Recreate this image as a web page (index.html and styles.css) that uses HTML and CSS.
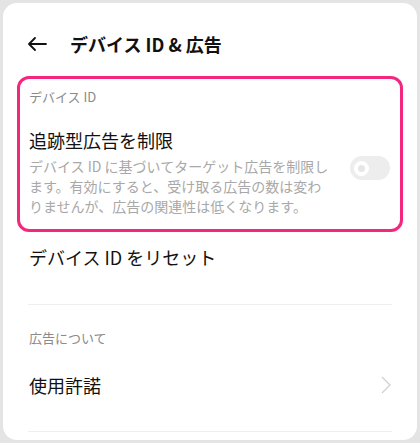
FILE: index.html
```html
<!DOCTYPE html>
<html lang="ja">
	<head>
		<meta charset="UTF-8" />
		<meta name="viewport" content="width=device-width, initial-scale=1.0" />
		<title>デバイス ID &amp; 広告</title>
		<link rel="stylesheet" href="styles.css">
	</head>
	<body>
		<div class="card">
			<div class="header">
				<svg class="back" width="20" height="14" viewBox="0 0 20 14">
					<path d="M19 7H2M8 1L2 7l6 6" fill="none" stroke="#111" stroke-width="1.8" stroke-linecap="round" stroke-linejoin="round" />
				</svg>
				<h1 class="title">デバイス ID &amp; 広告</h1>
			</div>

			<div class="highlight">
				<div class="sectionLabel">デバイス ID</div>
				<div class="row">
					<div class="rowText">
						<div class="rowTitle">追跡型広告を制限</div>
						<div class="rowDesc">デバイス ID に基づいてターゲット広告を制限し<br />ます。有効にすると、受け取る広告の数は変わ<br />りませんが、広告の関連性は低くなります。</div>
					</div>
					<div class="toggle"><span class="knob"></span></div>
				</div>
			</div>

			<div class="item itemReset">デバイス ID をリセット</div>
			<div class="divider"></div>

			<div class="sectionLabel sectionAbout">広告について</div>
			<div class="item itemLink">
				<span>使用許諾</span>
				<svg class="chevron" width="10" height="18" viewBox="0 0 10 18">
					<path d="M1 1l8 8-8 8" fill="none" stroke="#cfcfcf" stroke-width="1.2" />
				</svg>
			</div>
			<div class="divider"></div>
		</div>
	</body>
</html>
```

FILE: styles.css
```css
* {
	padding: 0;
	margin: 0;
	box-sizing: border-box;
}
body {
	background: #e4e4e4;
	padding: 3px;
	font-family: "Noto Sans CJK JP", "Noto Sans", sans-serif;
	color: #111;
}
.card {
	background: #fff;
	border-radius: 14px;
	height: 437px;
	padding: 13px 14px 0;
}
.header {
	height: 56px;
	display: flex;
	align-items: center;
	padding-left: 10px;
}
.back {
	display: block;
	margin-right: 23px;
}
.title {
	font-size: 18px;
	font-weight: bold;
	line-height: 26px;
}
.highlight {
	margin-top: 4px;
	border: 3px solid #f4277f;
	border-radius: 12px;
	padding: 8px 10px 13px 9px;
}
.sectionLabel {
	font-size: 13px;
	line-height: 19px;
	color: #8a8a8a;
}
.row {
	margin-top: 21px;
	display: flex;
	align-items: center;
}
.rowText {
	flex: 1;
}
.rowTitle {
	font-size: 18px;
	line-height: 26px;
	margin-bottom: 3px;
}
.rowDesc {
	font-size: 14px;
	line-height: 20px;
	color: #a8a8a8;
	white-space: nowrap;
}
.toggle {
	width: 40px;
	height: 24px;
	border-radius: 12px;
	background: #ededed;
	display: flex;
	align-items: center;
	padding-left: 4px;
	margin-bottom: 7px;
}
.knob {
	width: 15px;
	height: 15px;
	border-radius: 50%;
	border: 4px solid #fff;
	background: #e6e6e6;
}
.item {
	font-size: 18px;
	line-height: 26px;
	padding-left: 12px;
}
.itemReset {
	margin-top: 12px;
	padding-bottom: 34px;
}
.divider {
	height: 1px;
	background: #efefef;
	margin: 0 11px;
}
.sectionAbout {
	padding-left: 12px;
	margin-top: 23px;
}
.itemLink {
	margin-top: 25px;
	padding-bottom: 33px;
	padding-right: 12px;
	display: flex;
	align-items: center;
	justify-content: space-between;
}
.chevron {
	display: block;
}
```
